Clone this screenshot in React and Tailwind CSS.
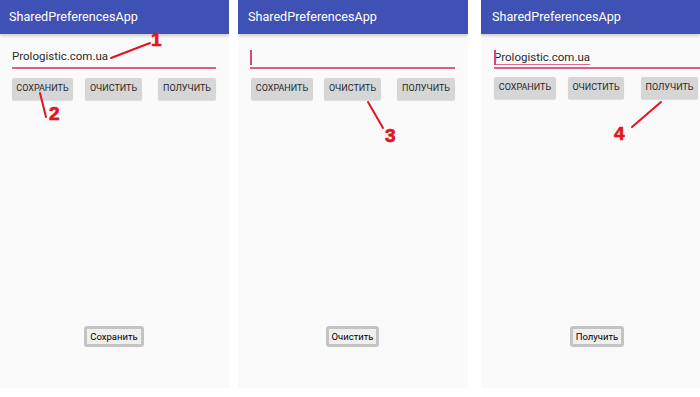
import React from "react";

const font = { fontFamily: "Roboto, 'Noto Sans', sans-serif" };

function Btn({ label, w, className = "" }) {
  return (
    <div
      className={`h-[22px] bg-[#d6d6d6] rounded-[2px] flex items-center justify-center text-[9px] text-[#262626] shadow-[0_1px_1px_rgba(0,0,0,0.12)] ${className}`}
      style={{ width: w }}
    >
      {label}
    </div>
  );
}

function Toast({ label }) {
  return (
    <div className="self-center mt-auto mb-[41px] rounded-[3px] border-[3px] border-[#c4c4c4] bg-[#efefef] px-[3px] h-[21px] flex items-center text-[9.5px] text-black leading-none">
      {label}
    </div>
  );
}

function Panel({ widthCls, inner, padL, children }) {
  return (
    <div className={`${widthCls} h-[388px] overflow-hidden shrink-0`}>
      <div className={`${inner} h-full bg-[#fafafa] flex flex-col`}>
        <div className="h-[34px] bg-[#3f51b5] flex items-center text-white text-[12.6px] shadow-[0_2px_3px_rgba(0,0,0,0.18)] relative" style={{ paddingLeft: padL }}>
          SharedPreferencesApp
        </div>
        {children}
      </div>
    </div>
  );
}

function Underline() {
  return <div className="h-[2px] bg-[#d9608a]" />;
}

export default function App() {
  return (
    <div className="relative w-[700px] h-[397px] bg-white overflow-hidden flex items-start" style={font}>
      {/* Panel 1 */}
      <Panel widthCls="w-[229px]" inner="w-[229px]" padL={9}>
        <div className="flex flex-col flex-1 pl-[12px] pr-[13px]">
          <div className="mt-[13px] h-[20px] flex items-center text-[11.5px] text-[#2a2a2a]">
            Prologistic.com.ua
          </div>
          <Underline />
          <div className="flex mt-[9px]">
            <Btn label="СОХРАНИТЬ" w={61} />
            <Btn label="ОЧИСТИТЬ" w={57} className="ml-[12px]" />
            <Btn label="ПОЛУЧИТЬ" w={58} className="ml-[16px]" />
          </div>
          <Toast label="Сохранить" />
        </div>
      </Panel>

      {/* Panel 2 */}
      <div className="w-[9px] shrink-0" />
      <Panel widthCls="w-[230px]" inner="w-[230px]" padL={10}>
        <div className="flex flex-col flex-1 pl-[12px] pr-[13px]">
          <div className="mt-[13px] h-[20px] flex items-center">
            <div className="w-[1.5px] h-[15px] bg-[#d6457c]" />
          </div>
          <Underline />
          <div className="flex mt-[9px] pl-[1px]">
            <Btn label="СОХРАНИТЬ" w={62} />
            <Btn label="ОЧИСТИТЬ" w={57} className="ml-[11px]" />
            <Btn label="ПОЛУЧИТЬ" w={58} className="ml-[16px]" />
          </div>
          <Toast label="Очистить" />
        </div>
      </Panel>

      {/* Panel 3 */}
      <div className="w-[13px] shrink-0" />
      <Panel widthCls="w-[219px]" inner="w-[219px]" padL={11}>
        <div className="flex flex-col flex-1 pl-[13px]">
          <div className="mt-[13px] h-[20px] flex items-center text-[11.5px] text-[#2a2a2a] relative">
            <div className="absolute left-0 top-[3px] w-[1.5px] h-[15px] bg-[#d6457c]" />
            <span className="border-b border-[#e06a8e] leading-[14px]">Prologistic.com.ua</span>
          </div>
          <Underline />
          <div className="flex mt-[8px]">
            <Btn label="СОХРАНИТЬ" w={62} />
            <Btn label="ОЧИСТИТЬ" w={56} className="ml-[12px]" />
            <Btn label="ПОЛУЧИТЬ" w={57} className="ml-[17px]" />
          </div>
          <Toast label="Получить" />
        </div>
      </Panel>

      {/* annotations */}
      <svg className="absolute inset-0 pointer-events-none" width="700" height="397">
        <g stroke="#e3141e" strokeWidth="2" strokeLinecap="round">
          <line x1="111" y1="58" x2="150" y2="43" />
          <line x1="40" y1="93" x2="46" y2="117" />
          <line x1="368" y1="102" x2="383" y2="128" />
          <line x1="661" y1="102" x2="632" y2="127" />
        </g>
      </svg>
      {[
        ["1", 151, 30],
        ["2", 49, 104],
        ["3", 385, 126],
        ["4", 614, 124],
      ].map(([d, x, y]) => (
        <div
          key={d}
          className="absolute text-[19px] font-bold leading-none text-[#e3141e]"
          style={{ left: x, top: y, fontFamily: "'Liberation Sans', Arial, sans-serif", WebkitTextStroke: "0.7px #e3141e" }}
        >
          {d}
        </div>
      ))}
    </div>
  );
}
